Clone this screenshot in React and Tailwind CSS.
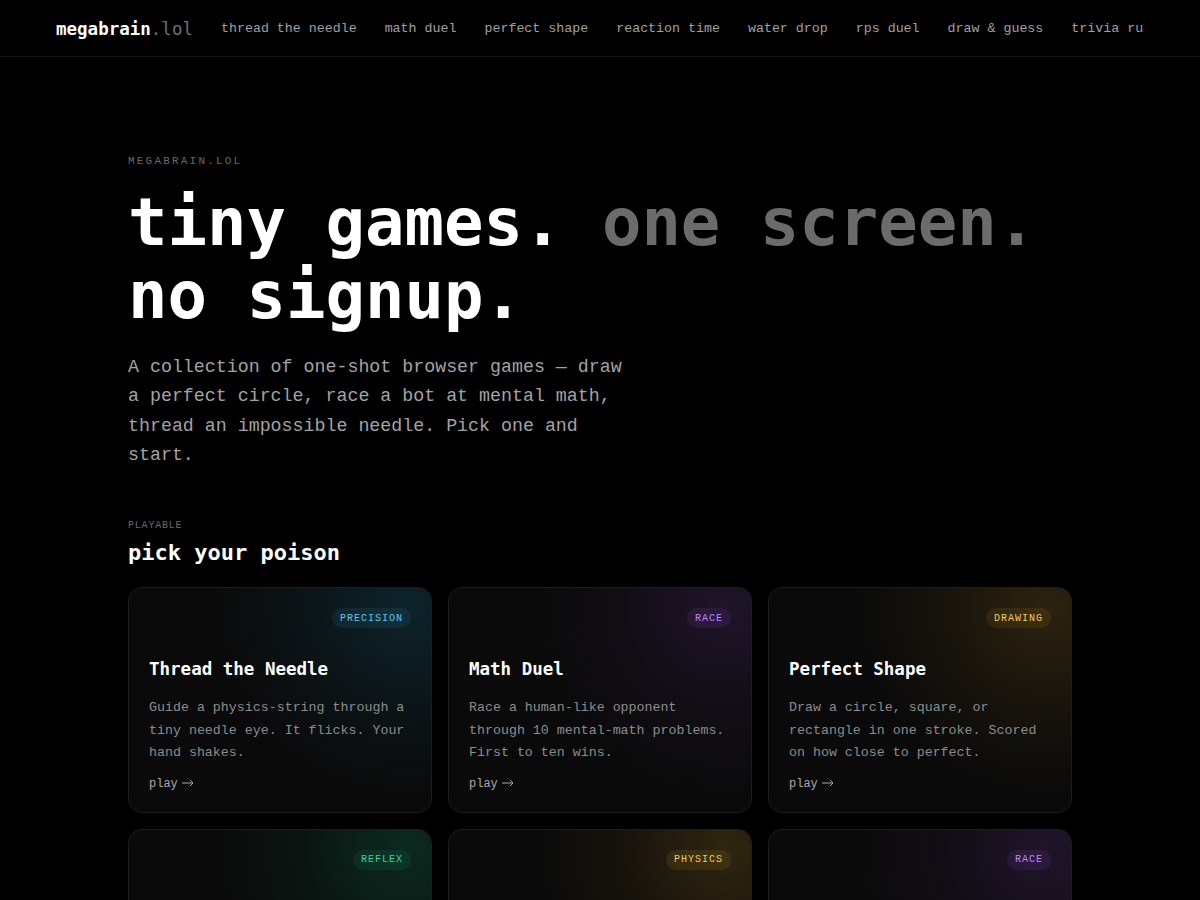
import React from "react";

const mono = { fontFamily: '"Liberation Mono", "DejaVu Sans Mono", monospace' };
const dv = { fontFamily: '"DejaVu Sans Mono", monospace' };

const games = [
  {
    tag: "PRECISION",
    title: "Thread the Needle",
    desc: "Guide a physics-string through a tiny needle eye. It flicks. Your hand shakes.",
    badge: "text-[#67c3e0] bg-[rgba(56,189,248,0.09)]",
    glow: "bg-[radial-gradient(circle_at_92%_8%,rgba(30,150,190,0.18),rgba(30,150,190,0.07)_30%,transparent_55%)]",
  },
  {
    tag: "RACE",
    title: "Math Duel",
    desc: "Race a human-like opponent through 10 mental-math problems. First to ten wins.",
    badge: "text-[#c084fc] bg-[rgba(168,85,247,0.10)]",
    glow: "bg-[radial-gradient(circle_at_92%_8%,rgba(140,70,200,0.17),rgba(140,70,200,0.06)_30%,transparent_55%)]",
  },
  {
    tag: "DRAWING",
    title: "Perfect Shape",
    desc: "Draw a circle, square, or rectangle in one stroke. Scored on how close to perfect.",
    badge: "text-[#f2c96b] bg-[rgba(234,179,8,0.09)]",
    glow: "bg-[radial-gradient(circle_at_92%_8%,rgba(200,150,40,0.18),rgba(200,150,40,0.07)_30%,transparent_55%)]",
  },
  {
    tag: "REFLEX",
    title: "Reaction Time",
    desc: "Wait for green, then click. Measured in milliseconds. No false starts.",
    badge: "text-[#34d399] bg-[rgba(16,185,129,0.10)]",
    glow: "bg-[radial-gradient(circle_at_92%_8%,rgba(16,170,120,0.20),rgba(16,170,120,0.07)_30%,transparent_55%)]",
  },
  {
    tag: "PHYSICS",
    title: "Water Drop",
    desc: "Tilt the glass and land a single drop in the cup. Gravity is not your friend.",
    badge: "text-[#f2c96b] bg-[rgba(234,179,8,0.10)]",
    glow: "bg-[radial-gradient(circle_at_92%_8%,rgba(200,150,40,0.20),rgba(200,150,40,0.07)_30%,transparent_55%)]",
  },
  {
    tag: "RACE",
    title: "RPS Duel",
    desc: "Rock, paper, scissors against a bot that learns your habits. Best of nine.",
    badge: "text-[#c084fc] bg-[rgba(168,85,247,0.10)]",
    glow: "bg-[radial-gradient(circle_at_92%_8%,rgba(140,70,200,0.17),rgba(140,70,200,0.06)_30%,transparent_55%)]",
  },
];

const nav = [
  "thread the needle",
  "math duel",
  "perfect shape",
  "reaction time",
  "water drop",
  "rps duel",
  "draw & guess",
  "trivia ru",
];

function Arrow() {
  return (
    <svg width="12" height="8" viewBox="0 0 12 8" fill="none" stroke="currentColor" strokeWidth="1" className="mt-[-1px]">
      <path d="M0 4H11" />
      <path d="M8 1L11 4L8 7" />
    </svg>
  );
}

function Card({ g }) {
  return (
    <div className={`rounded-[14px] border border-[#1d1d1d] bg-[#0a0a0a] ${g.glow} p-5 flex flex-col`}>
      <div className="flex justify-end">
        <span className={`h-5 px-2 rounded-full flex items-center text-[10px] tracking-[0.1em] ${g.badge}`}>
          {g.tag}
        </span>
      </div>
      <h3 className="mt-[29px] text-[17.5px] leading-6 font-bold text-white" style={dv}>
        {g.title}
      </h3>
      <p className="mt-[16px] text-[13.3px] leading-[22.5px] text-[#8c8c8c]">{g.desc}</p>
      <div className="mt-[11px] text-[12px] leading-4 text-[#a8a8a8] flex items-center gap-[4px]">
        <span>play</span>
        <Arrow />
      </div>
    </div>
  );
}

export default function App() {
  return (
    <div className="min-h-screen bg-black text-white" style={mono}>
      <header className="h-[57px] border-b border-[#161616] px-14 flex items-center gap-7 pt-[2px]">
        <div className="text-[17.5px] font-bold" style={dv}>
          <span className="text-white">megabrain</span>
          <span className="text-[#707070] font-normal">.lol</span>
        </div>
        <nav className="flex items-center gap-7">
          {nav.map((n) => (
            <span key={n} className="text-[13.3px] text-[#a0a0a0] whitespace-nowrap">
              {n}
            </span>
          ))}
        </nav>
      </header>

      <main className="max-w-[944px] mx-auto pt-[96px] pb-20">
        <div className="text-[11px] leading-4 tracking-[0.2em] text-[#6a6a6a]">MEGABRAIN.LOL</div>
        <h1 className="mt-[17px] text-[65.6px] leading-[73px] font-bold" style={dv}>
          <span className="text-white">tiny games. </span>
          <span className="text-[#6b6b6b]">one screen.</span>
          <br />
          <span className="text-white">no signup.</span>
        </h1>
        <p className="mt-[21px] max-w-[506px] text-[18.3px] leading-[29.3px] text-[#a3a3a3]">
          A collection of one-shot browser games — draw a perfect circle, race a bot at mental math, thread an
          impossible needle. Pick one and start.
        </p>

        <div className="mt-[49px] text-[10px] leading-[14px] tracking-[0.08em] text-[#6a6a6a]">PLAYABLE</div>
        <h2 className="mt-[6px] text-[22px] leading-7 font-bold text-white" style={dv}>
          pick your poison
        </h2>

        <div className="mt-[20px] grid grid-cols-3 gap-4">
          {games.map((g) => (
            <Card key={g.title} g={g} />
          ))}
        </div>
      </main>
    </div>
  );
}
